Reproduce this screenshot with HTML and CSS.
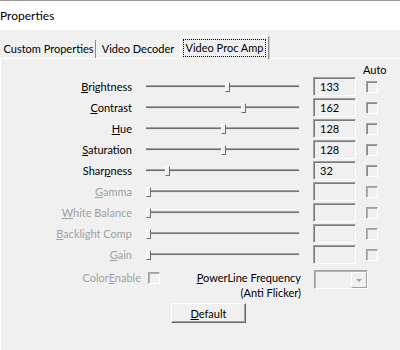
FILE: index.html
```html
<!DOCTYPE html>
<html lang="en">
<head>
    <meta charset="UTF-8">
    <title>Properties</title>
    <link rel="stylesheet" href="styles.css">
</head>
<body>

    <div class="titlebar">Properties</div>

    <div class="tabs">
        <div class="tab tab-first">Custom Properties</div>
        <div class="tab tab-second">Video Decoder</div>
        <div class="tab tab-active"><span class="focus">Video Proc Amp</span></div>
    </div>

    <div class="panel">
        <div class="auto-head">Auto</div>

        <div class="row">
            <span class="label"><u>B</u>rightness</span>
            <div class="slider"><div class="track"></div><div class="thumb" style="left:79px"></div></div>
            <div class="value">133</div>
            <span class="check"></span>
        </div>
        <div class="row">
            <span class="label"><u>C</u>ontrast</span>
            <div class="slider"><div class="track"></div><div class="thumb" style="left:95px"></div></div>
            <div class="value">162</div>
            <span class="check"></span>
        </div>
        <div class="row">
            <span class="label"><u>H</u>ue</span>
            <div class="slider"><div class="track"></div><div class="thumb" style="left:75px"></div></div>
            <div class="value">128</div>
            <span class="check"></span>
        </div>
        <div class="row">
            <span class="label"><u>S</u>aturation</span>
            <div class="slider"><div class="track"></div><div class="thumb" style="left:75px"></div></div>
            <div class="value">128</div>
            <span class="check"></span>
        </div>
        <div class="row">
            <span class="label">Shar<u>p</u>ness</span>
            <div class="slider"><div class="track"></div><div class="thumb" style="left:19px"></div></div>
            <div class="value">32</div>
            <span class="check"></span>
        </div>
        <div class="row disabled">
            <span class="label"><u>G</u>amma</span>
            <div class="slider"><div class="track"></div><div class="thumb" style="left:0px"></div></div>
            <div class="value"></div>
            <span class="check"></span>
        </div>
        <div class="row disabled">
            <span class="label"><u>W</u>hite Balance</span>
            <div class="slider"><div class="track"></div><div class="thumb" style="left:0px"></div></div>
            <div class="value"></div>
            <span class="check"></span>
        </div>
        <div class="row disabled">
            <span class="label"><u>B</u>acklight Comp</span>
            <div class="slider"><div class="track"></div><div class="thumb" style="left:0px"></div></div>
            <div class="value"></div>
            <span class="check"></span>
        </div>
        <div class="row disabled">
            <span class="label"><u>G</u>ain</span>
            <div class="slider"><div class="track"></div><div class="thumb" style="left:0px"></div></div>
            <div class="value"></div>
            <span class="check"></span>
        </div>

        <div class="bottom-row">
            <span class="color-label">Color<u>E</u>nable</span>
            <span class="check check-off"></span>
            <span class="power-label"><u>P</u>owerLine Frequency<br>(Anti Flicker)</span>
            <div class="combo"><span class="combo-btn"></span></div>
        </div>

        <button class="default-btn"><u>D</u>efault</button>
    </div>

</body>
</html>
```

FILE: styles.css
```css
body {
    margin: 0;
    width: 400px;
    height: 350px;
    overflow: hidden;
    background: #f0f0f0;
    font-family: 'Lato', 'Liberation Sans', sans-serif;
    font-size: 11px;
    color: #000;
}

.titlebar {
    height: 29px;
    background: #fff;
    border-top: 1px solid #999;
    line-height: 30px;
    font-size: 12px;
}

/* tab strip */
.tabs {
    display: flex;
    align-items: flex-end;
    height: 28px;
    padding-left: 2px;
    white-space: nowrap;
}

.tab {
    height: 18px;
    line-height: 17px;
    text-align: center;
    box-sizing: border-box;
}

.tab-first {
    width: 94px;
    border-right: 1px solid #8a8a8a;
}

.tab-second {
    width: 84px;
}

.tab-active {
    width: 89px;
    height: 23px;
    padding: 2px 2px 0;
    background: #f0f0f0;
    border-top: 1px solid #fff;
    border-left: 1px solid #fff;
    border-right: 1px solid #8a8a8a;
    box-shadow: 1px 0 0 #d0d0d0;
    position: relative;
    top: 1px;
}

.focus {
    display: block;
    height: 18px;
    line-height: 18px;
    outline: 1px dotted #000;
    outline-offset: -1px;
}

/* panel */
.panel {
    border-top: 1px solid #fff;
    border-left: 1px solid #fff;
    height: 291px;
}

.auto-head {
    height: 17px;
    padding-left: 362px;
    line-height: 22px;
}

.row {
    display: flex;
    align-items: center;
    height: 21px;
}

.label {
    width: 131px;
    text-align: right;
}

.slider {
    position: relative;
    width: 153px;
    height: 21px;
    margin-left: 14px;
    display: flex;
    align-items: center;
}

.track {
    width: 100%;
    height: 1px;
    background: #6d6d6d;
    border-top: 1px solid #a0a0a0;
    border-bottom: 1px solid #e8e8e8;
}

.thumb {
    position: absolute;
    top: 6px;
    width: 3px;
    height: 8px;
    background: #f0f0f0;
    border-top: 1px solid #fff;
    border-left: 1px solid #fff;
    border-right: 1px solid #6d6d6d;
    border-bottom: 1px solid #6d6d6d;
}

.value {
    width: 43px;
    height: 19px;
    margin-left: 14px;
    box-sizing: border-box;
    background: #f0f0f0;
    border: 1px solid;
    border-color: #a0a0a0 #fff #fff #a0a0a0;
    box-shadow: inset 1px 1px #7a7a7a;
    padding-left: 6px;
    line-height: 17px;
}

.check {
    display: inline-block;
    width: 12px;
    height: 12px;
    margin-left: 10px;
    box-sizing: border-box;
    border: 1px solid;
    border-color: #a0a0a0 #fff #fff #a0a0a0;
    box-shadow: inset 1px 1px #8a8a8a;
}

.disabled {
    color: #a0a0a0;
}

.disabled .track {
    background: #7a7a7a;
}

.disabled .value {
    box-shadow: inset 1px 1px #7a7a7a;
}

.disabled .check {
    box-shadow: inset 1px 1px #b0b0b0;
}

/* bottom controls */
.bottom-row {
    display: flex;
    align-items: flex-start;
    margin-top: 5px;
}

.color-label {
    width: 140px;
    text-align: right;
    line-height: 15px;
    color: #a0a0a0;
}

.check-off {
    margin-left: 7px;
    margin-top: 2px;
    box-shadow: inset 1px 1px #b0b0b0;
}

.power-label {
    width: 120px;
    margin-left: 21px;
    text-align: right;
    line-height: 15px;
    white-space: nowrap;
}

.combo {
    position: relative;
    width: 54px;
    height: 19px;
    margin-left: 13px;
    box-sizing: border-box;
    border: 1px solid;
    border-color: #a0a0a0 #fff #fff #a0a0a0;
    box-shadow: inset 1px 1px #b4b4b4;
}

.combo-btn {
    position: absolute;
    top: 1px;
    right: 0;
    width: 16px;
    height: 16px;
    box-sizing: border-box;
    border: 1px solid;
    border-color: #fff #a0a0a0 #a0a0a0 #fff;
    background: #f0f0f0;
}

.combo-btn::after {
    content: "";
    position: absolute;
    left: 4px;
    top: 6px;
    border-left: 3px solid transparent;
    border-right: 3px solid transparent;
    border-top: 3px solid #a0a0a0;
}

.default-btn {
    display: block;
    width: 75px;
    height: 20px;
    margin: 3px 0 0 170px;
    padding: 0;
    font: inherit;
    color: #000;
    background: #f0f0f0;
    border: 1px solid;
    border-color: #fff #696969 #696969 #fff;
    box-shadow: inset -1px -1px #a0a0a0;
}
```
